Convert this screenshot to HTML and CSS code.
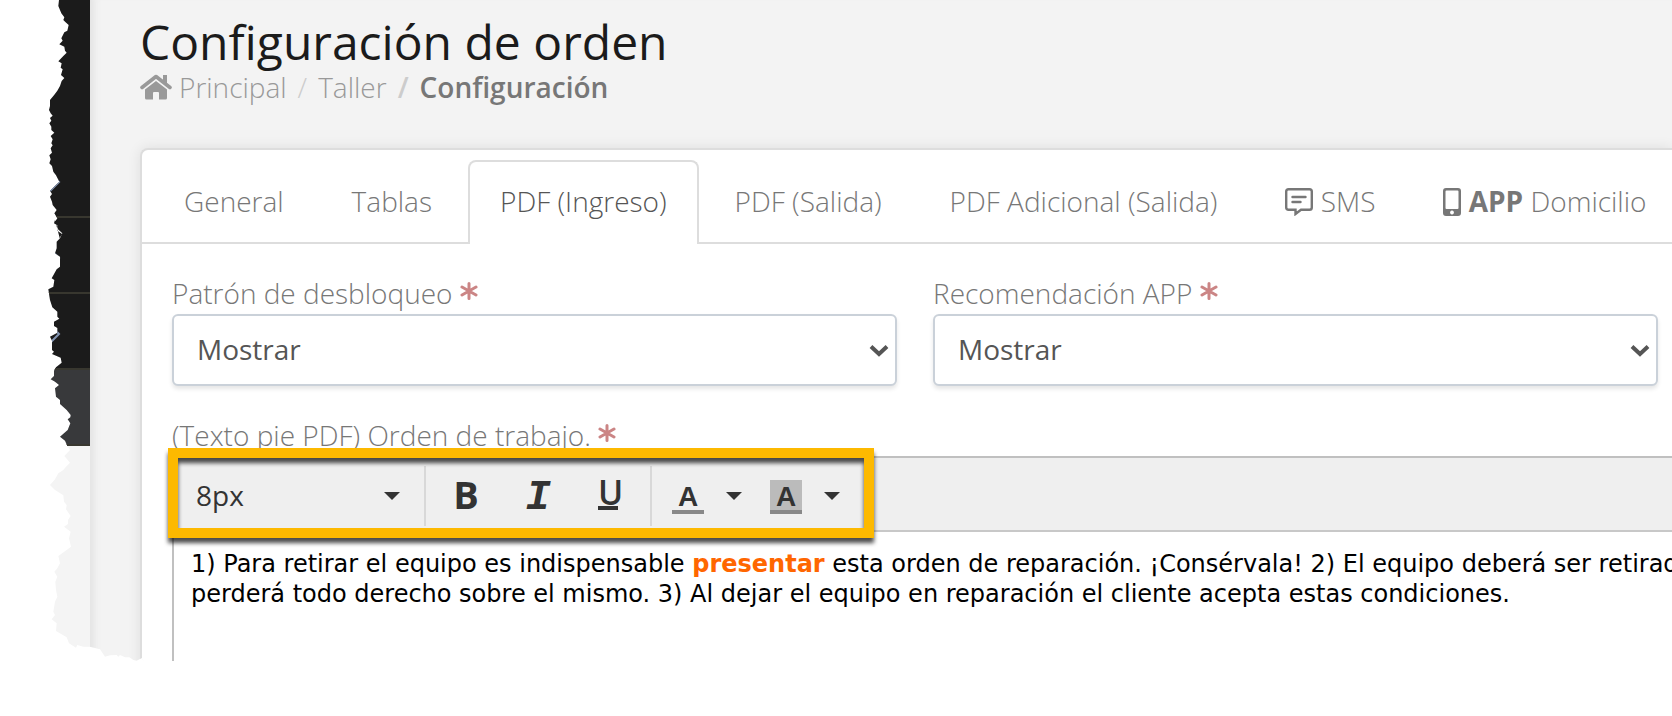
FILE: index.html
```html
<!DOCTYPE html>
<html lang="es">
<head>
    <meta charset="utf-8">
    <title>Configuración de orden</title>
    <link rel="stylesheet" href="styles.css">
</head>
<body>
<!-- Torn paper outline, drawn at three units per pixel -->
<svg class="defs" width="0" height="0" aria-hidden="true">
    <clipPath id="torn" clipPathUnits="userSpaceOnUse">
        <path transform="scale(.33333)" d="M177 0L175 18L184 40L193 52L190 60L196 66L206 75L202 92L193 97L184 115L188 122L178 133L193 140L195 152L200 158L190 168L175 184L185 190L182 203L188 208L183 225L193 234L185 243L180 258L172 272L163 284L150 300L150 318L147 330L152 340L158 347L150 354L154 362L148 370L154 380L154 390L163 398L152 408L158 418L154 430L158 436L152 445L156 458L148 466L152 478L148 490L156 498L160 515L168 526L178 545L150 572L156 582L150 590L156 605L158 615L170 630L163 640L172 655L163 668L172 678L172 692L186 702L180 712L180 718
        L165 660L162 670L172 676L174 688L187 700L180 715L170 725L170 745L165 760L180 770L180 800L170 808L155 835L163 840L160 860L145 868L148 888L150 900L157 922L172 935L172 950L178 956L162 965L162 978L172 984L172 998L150 1010L156 1022L156 1050L162 1055L156 1062L182 1073L185 1088L168 1102L162 1112L162 1128L152 1138L165 1145L177 1155L165 1165L168 1190L180 1200L180 1212L200 1230L212 1245L211 1252L203 1258L211 1270L203 1290L180 1310L195 1322L202 1338L210 1350L193 1368L210 1388L198 1400L190 1410L175 1420L165 1438L150 1455L165 1470L190 1486L192 1505L200 1515L198 1528L212 1548L204 1560L204 1572L192 1580L212 1595L207 1615L213 1640L200 1650L175 1668L180 1690L172 1705L163 1715L172 1730L166 1745L168 1770L172 1790L165 1805L160 1835L165 1845L155 1858L170 1870L168 1893L200 1912L207 1930L228 1943L232 1935L250 1940L270 1940L300 1948L315 1970L330 1966L350 1965L355 1970L360 1965L375 1972L388 1972L400 1980L410 1982L425 1974L430 1983L30000 1983L30000 0Z"/>
    </clipPath>
</svg>

<div class="page">
    <div class="sidebar">
        <div class="side-item side-first">
            <svg class="side-arrow" width="12" height="20" viewBox="0 0 12 20"><path d="M1 1l9 9-9 9"/></svg>
        </div>
        <div class="side-item">
            <svg class="side-arrow" width="12" height="20" viewBox="0 0 12 20"><path d="M1 1l9 9-9 9"/></svg>
        </div>
        <div class="side-item">
            <svg class="side-arrow" width="12" height="20" viewBox="0 0 12 20"><path d="M1 1l9 9-9 9"/></svg>
        </div>
        <div class="side-item side-selected"></div>
    </div>

    <main class="content">
        <h1>Configuración de orden</h1>
        <nav class="breadcrumb">
            <svg class="home" width="32" height="26" viewBox="0 0 32 26"><path d="M2 13.500L16 2.500L30 13.500" fill="none" stroke="currentColor" stroke-width="3.600" stroke-linecap="round" stroke-linejoin="round"/><path d="M23 1h4v9l-4-3zM5 15.500L16 7L27 15.500V24q0 1.500-1.500 1.500H19V19q0-1-1-1h-4q-1 0-1 1v6.500H6.500Q5 25.500 5 24z" fill="currentColor"/></svg>
            <a href="#">Principal</a>
            <span class="slash">/</span>
            <a href="#">Taller</a>
            <strong class="slash">/</strong>
            <strong>Configuración</strong>
        </nav>

        <div class="card">
            <!-- Tabs -->
            <nav class="tabs">
                <a class="tab" href="#">General</a>
                <a class="tab" href="#">Tablas</a>
                <a class="tab active" href="#">PDF (Ingreso)</a>
                <a class="tab" href="#">PDF (Salida)</a>
                <a class="tab" href="#">PDF Adicional (Salida)</a>
                <a class="tab" href="#"><svg width="28" height="28" viewBox="0 0 28 28"><path d="M3.500 1.200h21q2.300 0 2.300 2.300v16q0 2.300-2.300 2.300h-8.500L10.500 26v-4.200h-7q-2.300 0-2.300-2.300v-16q0-2.300 2.300-2.300zM7.500 9h13M7.500 14h8" fill="none" stroke="currentColor" stroke-width="2.400" stroke-linecap="round"/></svg> SMS</a>
                <a class="tab" href="#"><svg width="18" height="28" viewBox="0 0 18 28"><path fill="currentColor" fill-rule="evenodd" d="M3 0h12q3 0 3 3v22q0 3-3 3H3q-3 0-3-3V3q0-3 3-3zM3.500 2.500q-1 0-1 1V20q0 1 1 1h11q1 0 1-1V3.500q0-1-1-1zM9 22.600a1.900 1.900 0 1 0 .01 0z"/></svg> <b>APP</b> Domicilio</a>
            </nav>

            <div class="form">
                <div class="fields">
                    <div class="field">
                        <label class="label" for="patron">Patrón de desbloqueo <svg class="required" width="18" height="18" viewBox="0 0 18 18"><path d="M9 1.500v15M2 5l14 8M16 5L2 13"/></svg></label>
                        <div class="select-box">
                            <select id="patron"><option>Mostrar</option></select>
                            <svg class="chevron" width="20" height="14" viewBox="0 0 20 14"><path d="M2 2.500l8 7.500 8-7.500"/></svg>
                        </div>
                    </div>
                    <div class="field">
                        <label class="label" for="recomendacion">Recomendación APP <svg class="required" width="18" height="18" viewBox="0 0 18 18"><path d="M9 1.500v15M2 5l14 8M16 5L2 13"/></svg></label>
                        <div class="select-box">
                            <select id="recomendacion"><option>Mostrar</option></select>
                            <svg class="chevron" width="20" height="14" viewBox="0 0 20 14"><path d="M2 2.500l8 7.500 8-7.500"/></svg>
                        </div>
                    </div>
                </div>

                <div class="label" id="pie">(Texto pie PDF) Orden de trabajo. <svg class="required" width="18" height="18" viewBox="0 0 18 18"><path d="M9 1.500v15M2 5l14 8M16 5L2 13"/></svg></div>
                <div class="editor">
                    <div class="toolbar">
                        <div class="size-box">
                            <select class="size" aria-label="Tamaño de fuente"><option>8px</option></select>
                            <svg class="size-arrow" width="16" height="8" viewBox="0 0 16 8"><path d="M0 0h16L8 8z"/></svg>
                        </div>
                        <div class="group">
                            <button class="tool bold" aria-label="Negrita">B</button>
                            <button class="tool italic" aria-label="Cursiva">I</button>
                            <button class="tool underline" aria-label="Subrayado"><span>U</span></button>
                        </div>
                        <div class="colors">
                            <button class="tool color" aria-label="Color de texto"><span>A</span></button>
                            <button class="tool more" aria-label="Elegir color de texto"><svg width="16" height="8" viewBox="0 0 16 8"><path d="M0 0h16L8 8z"/></svg></button>
                            <button class="tool color back" aria-label="Color de fondo"><span>A</span></button>
                            <button class="tool more" aria-label="Elegir color de fondo"><svg width="16" height="8" viewBox="0 0 16 8"><path d="M0 0h16L8 8z"/></svg></button>
                        </div>
                        <div class="highlight"></div>
                    </div>
                    <div class="editor-text" role="textbox" aria-multiline="true" aria-labelledby="pie" contenteditable="true" spellcheck="false">1) Para retirar el equipo es indispensable <b>presentar</b> esta orden de reparación. ¡Consérvala! 2) El equipo deberá ser retirado<br>perderá todo derecho sobre el mismo. 3) Al dejar el equipo en reparación el cliente acepta estas condiciones.</div>
                </div>
            </div>
        </div>
    </main>
</div>
</body>
</html>
```
FILE: styles.css
```css
* {
    box-sizing: border-box;
}
body {
    margin: 0;
    background: #fff;
    color: #777;
    font-family: "Open Sans", sans-serif;
    font-size: 28px;
    font-weight: 300;
    line-height: 38px;
    overflow: hidden;
}
a {
    color: inherit;
    text-decoration: none;
}
.defs {
    position: absolute;
}
.page {
    display: flex;
    clip-path: url(#torn);
}

/* Sidebar */
.sidebar {
    flex: none;
    width: 90px;
    background: #f4f4f4;
}
.side-item {
    display: flex;
    align-items: flex-end;
    height: 76px;
    padding: 0 0 24px 49px;
    background: #1b1b1b;
    border-bottom: 2px solid #38372f;
}
.side-first {
    height: 218px;
}
.side-selected {
    background: #38393b;
}
.side-arrow {
    fill: none;
    stroke: #8496b3;
    stroke-width: 2;
}

/* Content */
.content {
    flex: 1;
    min-width: 0;
    padding: 12px 0 0 50px;
    background: #f3f3f3;
    box-shadow: inset 10px 0 10px -8px #ddd;
}
h1 {
    margin: 0;
    color: #1b1b1b;
    font-size: 48px;
    font-weight: 400;
    line-height: 60px;
}
.breadcrumb {
    display: flex;
    gap: 11px;
    margin-bottom: 46px;
    line-height: 30px;
    color: #999;
}
.breadcrumb .home {
    margin: 2px -4px 0 0;
}
.breadcrumb strong {
    font-weight: 600;
    color: #777;
}
.breadcrumb .slash {
    color: #ccc;
}
.card {
    background: #fff;
    border: 2px solid #ddd;
    border-right: 0;
    border-radius: 8px 0 0 0;
    box-shadow: 0 0 14px rgba(0, 0, 0, 0.09);
}

/* Tabs */
.tabs {
    display: flex;
    gap: 4px;
    padding: 10px 0 0 10px;
    border-bottom: 2px solid #ddd;
    white-space: nowrap;
}
.tab {
    margin-bottom: -2px;
    padding: 20px 30px 24px;
    border: 2px solid transparent;
    border-bottom: 0;
    border-radius: 8px 8px 0 0;
}
.tab svg {
    vertical-align: -4px;
}
.tab b {
    font-weight: 700;
}
.tab.active {
    color: #555;
    background: #fff;
    border-color: #ddd;
}

/* Form */
.form {
    padding: 30px 0 0 30px;
}
.fields {
    display: grid;
    grid-template-columns: 1fr 1fr;
    gap: 36px;
    padding-right: 14px;
    margin-bottom: 30px;
}
.label {
    display: block;
    margin-bottom: 2px;
}
.required {
    fill: none;
    stroke: #cb8585;
    stroke-width: 3;
    stroke-linecap: round;
    vertical-align: 4px;
}
.select-box {
    position: relative;
}
.select-box select {
    display: block;
    width: 100%;
    height: 72px;
    padding: 0 23px 2px;
    appearance: none;
    background: #fff;
    border: 2px solid #cad1d9;
    border-radius: 6px;
    box-shadow: 0 3px 4px rgba(0, 0, 0, 0.1);
    color: #555;
    font: 400 28px "Open Sans", sans-serif;
}
.chevron {
    position: absolute;
    right: 8px;
    top: 30px;
    fill: none;
    stroke: #555;
    stroke-width: 4;
    pointer-events: none;
}

/* Editor */
.editor {
    border: 2px solid #c0c0c0;
    border-right: 0;
}
.toolbar {
    position: relative;
    display: flex;
    height: 74px;
    padding: 8px 0 4px;
    background: #efefef;
    border-bottom: 2px solid #c8c8c8;
}
.size-box {
    position: relative;
    width: 252px;
    border-right: 2px solid #d8d8d8;
}
.size {
    width: 100%;
    height: 60px;
    padding: 0 22px 2px;
    appearance: none;
    background: none;
    border: 0;
    color: #333;
    font: 400 28px "Open Sans", sans-serif;
}
.size-arrow {
    position: absolute;
    right: 24px;
    top: 26px;
    pointer-events: none;
}
.toolbar svg {
    fill: #333;
}
.group {
    display: flex;
    gap: 12px;
    padding: 0 10px 0 10px;
    border-right: 2px solid #d8d8d8;
}
.tool {
    width: 60px;
    padding: 0;
    background: none;
    border: 0;
    color: #333;
    font: 700 38px/56px "Open Sans", sans-serif;
}
.bold {
    padding-bottom: 4px;
}
.italic {
    padding-top: 4px;
    font: italic 700 42px/56px "Liberation Mono", monospace;
}
.underline {
    padding-right: 4px;
    font-size: 34px;
    font-weight: 600;
}
.underline span {
    display: block;
    width: 20px;
    margin: 0 auto;
    height: 28px;
    line-height: 20px;
    border-bottom: 4px solid #333;
}
.colors {
    display: flex;
    padding-left: 12px;
}
.color {
    width: 48px;
}
.color span {
    display: block;
    width: 32px;
    height: 34px;
    margin: 2px auto 0;
    border-bottom: 4px solid #888;
    font: 700 28px/34px "Liberation Sans", sans-serif;
}
.back span {
    background: #bbb;
}
.more {
    display: flex;
    align-items: center;
    justify-content: center;
    width: 50px;
    padding-right: 6px;
}
.highlight {
    position: absolute;
    left: -6px;
    top: -10px;
    width: 706px;
    height: 90px;
    border: 10px solid #fdb900;
    filter: drop-shadow(0 5px 2px rgba(0, 0, 0, 0.7));
    pointer-events: none;
}
.editor-text {
    height: 160px;
    padding: 17px 0 0 17px;
    overflow: hidden;
    color: #000;
    font: 400 24px/30px Verdana, "DejaVu Sans", sans-serif;
    white-space: nowrap;
}
.editor-text b {
    color: #f60;
}
```
